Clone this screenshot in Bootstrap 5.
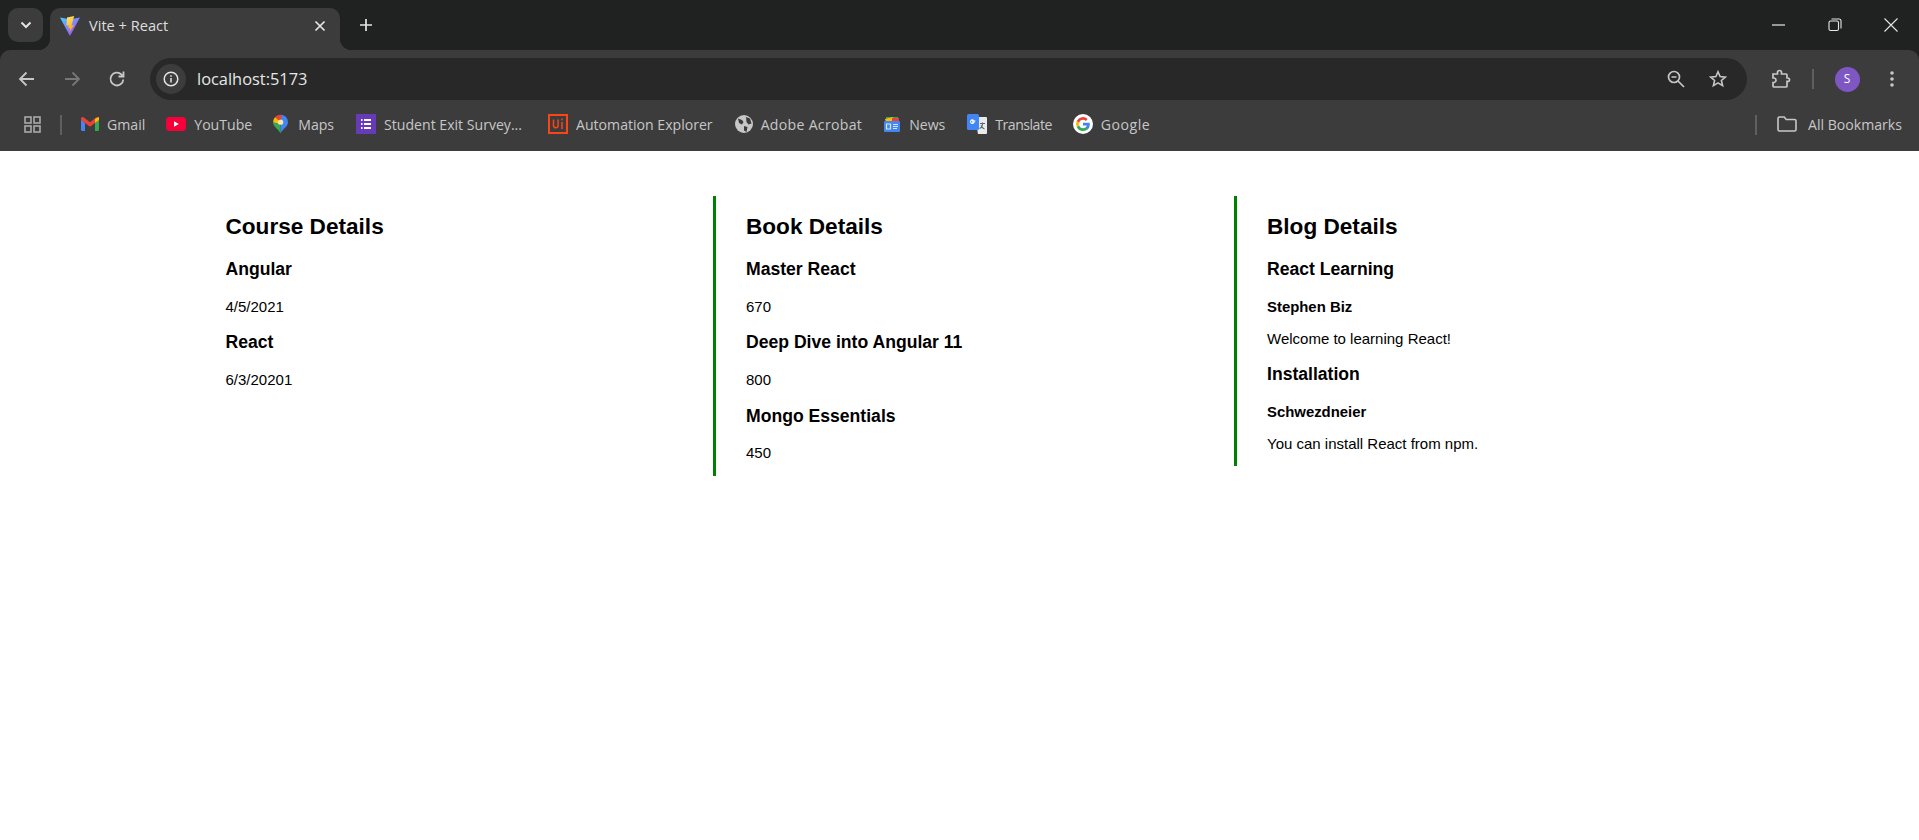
<!DOCTYPE html>
<html lang="en">
<head>
<meta charset="UTF-8" />
<title>Vite + React</title>
<link href="https://cdn.jsdelivr.net/npm/bootstrap@5.3.0/dist/css/bootstrap.min.css" rel="stylesheet" />
<style>
  body { background: #fff; color: #000; font-family: "Liberation Sans", Arial, sans-serif; }
  svg { display: block; flex-shrink: 0; }

  /* browser chrome */
  .chrome-ui { background: #202221; font-family: "Open Sans", "Noto Sans", sans-serif; color: #c7c7c7; }
  .tab-strip { height: 50px; padding: 8px 8px 0; }
  .tab-menu { width: 35px; height: 34px; border-radius: 10px; background: #3c3c3c; }
  .tab-active { position: relative; width: 290px; height: 42px; margin-left: 7px; padding: 0 14px 6px 10px; background: #3c3c3c; border-radius: 10px 10px 0 0; font-size: 14.6px; color: #dedede; }
  .tab-active::before, .tab-active::after { content: ""; position: absolute; bottom: 0; width: 12px; height: 12px; }
  .tab-active::before { left: -12px; background: radial-gradient(circle at 0 0, transparent 12px, #3c3c3c 12.5px); }
  .tab-active::after { right: -12px; background: radial-gradient(circle at 100% 0, transparent 12px, #3c3c3c 12.5px); }
  .tab-title { margin-left: 9px; }
  .tab-plus { margin-left: 19px; margin-top: -8px; }
  .win-controls { gap: 42px; margin-right: 13px; margin-top: -8px; }
  .tool-bar { height: 50px; background: #3c3c3c; border-radius: 10px 10px 0 0; padding: 0 0 0 16px; }
  .nav-icons { height: 58px; gap: 23px; width: 134px; }
  .reload-icon { margin-left: 2px; }
  .url-pill { width: 1597px; height: 42px; margin-top: 8px; background: #282828; border-radius: 21px; padding: 0 20px 0 6px; }
  .info-circle { width: 30px; height: 30px; border-radius: 50%; background: #3c3c3c; }
  .url-text { margin-left: 11px; font-size: 16.4px; color: #e6e6e6; }
  .tool-end { height: 58px; }
  .ext-icon { margin-left: 24px; }
  .tool-sep { margin-left: 21px; }
  .user-avatar { width: 25px; height: 25px; margin-left: 20.5px; border-radius: 50%; background: #7e57c2; color: #fff; font-size: 12px; }
  .more-icon { margin-left: 29.5px; }
  .bar-sep { width: 2px; height: 20px; background: #5f5f5f; }
  .bookmark-bar { height: 51px; background: #3c3c3c; padding: 0 17px 2px 24px; font-size: 14.1px; }
  .bookmark-item { gap: 8px; margin-left: 21px; white-space: nowrap; }
  .apps-sep { margin: 0 0 0 19px; }
  .apps-sep + .bookmark-item { margin-left: 19px; }
  .maps-mark { gap: 10px; }
  .forms-mark { margin-left: 22px; }
  .ui-mark { margin-left: 26px; }
  .acrobat-mark { margin-left: 22px; letter-spacing: .3px; }
  .translate-mark { margin-left: 22px; letter-spacing: -.5px; }
  .google-mark { letter-spacing: .5px; }
  .all-marks { gap: 11px; margin-left: 20px; }

  /* page */
  .detail-row { background: #fff; padding: 45px 0 0 192px; }
  .detail-col { width: 521px; padding: 18px 0 15px 33.5px; }
  .detail-col + .detail-col { border-left: 3px solid green; padding-left: 30px; }
  .detail-col h2 { font-size: 22.6px; font-weight: 700; line-height: 26px; margin: 0 0 19px; }
  .detail-col h3 { font-size: 17.6px; font-weight: 700; line-height: 20px; margin: 0 0 19.7px; }
  .detail-col h4 { font-size: 14.9px; font-weight: 700; line-height: 16px; margin: 0 0 16px; }
  .detail-col p { font-size: 15px; line-height: 16px; margin: 0 0 17.6px; }
  .detail-col p:last-child { margin-bottom: 0; }
  .detail-col.blog-entry { padding-bottom: 14.5px; }
  .blog-entry p { margin-bottom: 17.5px; }
</style>
</head>
<body>
  <div class="chrome-ui">
    <div class="tab-strip d-flex align-items-start">
      <div class="tab-menu d-flex align-items-center justify-content-center">
        <svg width="14" height="14" viewBox="0 0 14 14"><path d="M2.5 4.5 7 9l4.5-4.5" fill="none" stroke="#e3e3e3" stroke-width="2"/></svg>
      </div>
      <div class="tab-active d-flex align-items-center">
        <svg width="20" height="20" viewBox="0 0 20 20">
          <defs>
            <linearGradient id="viteBody" x1="0" y1="0" x2="1" y2="1"><stop offset="0" stop-color="#41d1ff"/><stop offset="1" stop-color="#bd34fe"/></linearGradient>
            <linearGradient id="viteBolt" x1="0" y1="0" x2="0.4" y2="1"><stop offset="0" stop-color="#ffea83"/><stop offset="1" stop-color="#ffa800"/></linearGradient>
          </defs>
          <path d="M0 1.5 10 3.2 20 1.5 10.4 19.3a.5.5 0 0 1-.9 0z" fill="url(#viteBody)"/>
          <path d="M14.2 0 7 1.4l-.5 8.3 2.2-.5-.5 3.2 2-.4-.7 4.2L14 9l-2.4.5.8-3z" fill="url(#viteBolt)"/>
        </svg>
        <span class="flex-grow-1 tab-title">Vite + React</span>
        <svg width="12" height="12" viewBox="0 0 12 12"><path d="M1.5 1.5l9 9m0-9l-9 9" stroke="#e6e6e6" stroke-width="1.7"/></svg>
      </div>
      <svg class="tab-plus align-self-center" width="14" height="14" viewBox="0 0 14 14"><path d="M7 1v12M1 7h12" stroke="#e6e6e6" stroke-width="1.7"/></svg>
      <div class="win-controls d-flex align-items-center align-self-center ms-auto">
        <svg width="14" height="14" viewBox="0 0 14 14"><path d="M0 7h13" stroke="#e6e6e6" stroke-width="1.2"/></svg>
        <svg width="14" height="14" viewBox="0 0 14 14" fill="none" stroke="#e6e6e6" stroke-width="1.1"><rect x="1" y="3" width="9.500" height="9.500" rx="1.500"/><path d="M3.500 1h7.500a2 2 0 0 1 2 2v7.500"/></svg>
        <svg width="14" height="14" viewBox="0 0 14 14"><path d="M.5.5l13 13m0-13l-13 13" stroke="#e6e6e6" stroke-width="1.1"/></svg>
      </div>
    </div>

    <div class="tool-bar d-flex align-items-start">
      <div class="nav-icons d-flex align-items-center">
        <svg width="22" height="18" viewBox="0 0 22 18" fill="none" stroke="#c7c7c7" stroke-width="1.8"><path d="M18 9H4M10.500 2.500 4 9l6.500 6.500"/></svg>
        <svg width="22" height="18" viewBox="0 0 22 18" fill="none" stroke="#777" stroke-width="1.8"><path d="M4 9h14M11.500 2.500 18 9l-6.500 6.500"/></svg>
        <svg class="reload-icon" width="18" height="18" viewBox="0 0 18 18" fill="none" stroke="#c7c7c7" stroke-width="1.8"><path d="M15.300 9.500a6.400 6.400 0 1 1-1.900-5L15.500 6.500"/><path d="M15.500 1.500v5h-5" /></svg>
      </div>
      <div class="url-pill d-flex align-items-center">
        <div class="info-circle d-flex align-items-center justify-content-center">
          <svg width="16" height="16" viewBox="0 0 16 16" fill="none" stroke="#e3e3e3" stroke-width="1.500"><circle cx="8" cy="8" r="6.800"/><path d="M8 7v4.500M8 4.200v1.500"/></svg>
        </div>
        <span class="url-text flex-grow-1">localhost:5173</span>
        <svg class="me-4" width="18" height="18" viewBox="0 0 18 18" fill="none" stroke="#c7c7c7" stroke-width="1.700"><circle cx="7" cy="7" r="5.500"/><path d="M11 11l6 6M4.500 7h5"/></svg>
        <svg width="18" height="18" viewBox="0 0 18 18" fill="none" stroke="#c7c7c7" stroke-width="1.600"><path d="M9 1.800l2.100 4.800 5.200.5-3.900 3.400 1.200 5.100L9 12.900l-4.600 2.700 1.200-5.100L1.700 7.100l5.200-.5z"/></svg>
      </div>
      <div class="tool-end d-flex align-items-center">
        <svg class="ext-icon" width="20" height="20" viewBox="0 0 20 20" fill="none" stroke="#c7c7c7" stroke-width="1.700"><path d="M2 5h4.500V3.500a2 2 0 0 1 4 0V5H15a1 1 0 0 1 1 1v3h.8a1.700 1.700 0 0 1 0 3.400H16V17a1 1 0 0 1-1 1H3a1 1 0 0 1-1-1v-3.500h1.200a2.300 2.300 0 0 0 0-4.500H2z"/></svg>
        <span class="bar-sep tool-sep"></span>
        <span class="user-avatar d-flex align-items-center justify-content-center">S</span>
        <svg class="more-icon" width="6" height="18" viewBox="0 0 6 18" fill="#c7c7c7"><circle cx="3" cy="3" r="1.800"/><circle cx="3" cy="9" r="1.800"/><circle cx="3" cy="15" r="1.800"/></svg>
      </div>
    </div>

    <div class="bookmark-bar d-flex align-items-center">
      <svg width="17" height="17" viewBox="0 0 17 17" fill="none" stroke="#a9a9a9" stroke-width="1.600"><rect x="1" y="1" width="6" height="6"/><rect x="10" y="1" width="6" height="6"/><rect x="1" y="10" width="6" height="6"/><rect x="10" y="10" width="6" height="6"/></svg>
      <span class="bar-sep apps-sep"></span>
      <div class="bookmark-item d-flex align-items-center">
        <svg width="18" height="14" viewBox="0 0 18 14"><path d="M0 2v10.500A1.500 1.500 0 0 0 1.500 14H4V6z" fill="#4285f4"/><path d="M14 6v8h2.500a1.500 1.500 0 0 0 1.500-1.500V2z" fill="#34a853"/><path d="M0 1.500C0 .2 1.500-.5 2.500.3L9 5.200 15.500.3C16.500-.5 18 .2 18 1.500V3l-4 3-5 3.700L4 6 0 3z" fill="#ea4335"/><path d="M14 1.700 18 0v3l-4 3z" fill="#fbbc04"/></svg>
        <span>Gmail</span>
      </div>
      <div class="bookmark-item d-flex align-items-center">
        <svg width="20" height="14" viewBox="0 0 20 14"><rect width="20" height="14" rx="3.500" fill="#f5003b"/><path d="M8 4.200v5.600L12.800 7z" fill="#fff"/></svg>
        <span>YouTube</span>
      </div>
      <div class="bookmark-item maps-mark d-flex align-items-center">
        <svg width="15" height="20" viewBox="0 0 16 20"><path d="M8 0a8 8 0 0 1 8 8c0 4.500-5.500 7-8 12z" fill="#4285f4"/><path d="M8 20C5.500 15 0 12.500 0 8l5 1.500 3 2z" fill="#34a853"/><path d="M0 8a8 8 0 0 1 2.300-5.600L6 6 5 9.500z" fill="#fbbc04"/><path d="M2.300 2.400A8 8 0 0 1 8 0l2 3-4 3z" fill="#ea4335"/><circle cx="8" cy="8" r="2.900" fill="#fbe9a5"/></svg>
        <span>Maps</span>
      </div>
      <div class="bookmark-item forms-mark d-flex align-items-center">
        <svg width="20" height="20" viewBox="0 0 20 20"><rect width="20" height="20" fill="#673ab7"/><path d="M5 6h1.500M8 6h7M5 10h1.500M8 10h7M5 14h1.500M8 14h7" stroke="#fff" stroke-width="1.800"/></svg>
        <span>Student Exit Survey...</span>
      </div>
      <div class="bookmark-item ui-mark d-flex align-items-center">
        <svg width="20" height="20" viewBox="0 0 20 20" fill="none"><rect x="1" y="1" width="18" height="18" stroke="#fa4616" stroke-width="2"/><path d="M5.500 5.500v6a2.300 2.300 0 0 0 4.600 0v-6M14 8v7M14 4.500v1.700" stroke="#fa4616" stroke-width="1.500"/></svg>
        <span>Automation Explorer</span>
      </div>
      <div class="bookmark-item acrobat-mark d-flex align-items-center">
        <svg width="18" height="18" viewBox="0 0 18 18"><circle cx="9" cy="9" r="9" fill="#c7c7c7"/><path d="M3 3.500 7 5l1.500 2L7 9.500 4 8zM11 2l4 1.500 1.500 5-3 1-2-2.500zM9 11l3.500 1-1 5-2.500-1.500z" fill="#3c3c3c"/></svg>
        <span>Adobe Acrobat</span>
      </div>
      <div class="bookmark-item d-flex align-items-center">
        <svg width="18" height="18" viewBox="0 0 18 18"><path d="M3 2h12v5H3z" fill="#34a853"/><path d="M2 4l8-2 1 5H3z" fill="#fbbc04"/><path d="M9 3h7v5H9z" fill="#ea4335"/><rect x="1" y="6" width="16" height="11" rx="1" fill="#4285f4"/><path d="M3.500 9h4v5h-4zM10 9.500h5M10 11.500h5M10 13.500h4" fill="none" stroke="#d8e6fd" stroke-width="1.200"/></svg>
        <span>News</span>
      </div>
      <div class="bookmark-item translate-mark d-flex align-items-center">
        <svg width="20" height="20" viewBox="0 0 20 20"><path d="M8 3h11a1 1 0 0 1 1 1v15a1 1 0 0 1-1 1h-8z" fill="#e8eaed"/><rect width="12" height="16" rx="1.500" fill="#4285f4"/><path d="M8.500 7H5.800v1.300h1.300a1.800 1.800 0 1 1-.5-2" fill="none" stroke="#fff" stroke-width="1.100"/><path d="M13 9.500h5M15.500 8.500v1c0 2.500-1.500 4.500-3 5M14 11.500c.8 2 2 3 3.500 3.500" fill="none" stroke="#5f6368" stroke-width="1.100"/></svg>
        <span>Translate</span>
      </div>
      <div class="bookmark-item google-mark d-flex align-items-center">
        <svg width="20" height="20" viewBox="0 0 20 20"><circle cx="10" cy="10" r="10" fill="#fff"/><path d="M16.800 10.200c0-.6 0-1-.1-1.500H10v2.800h3.800a3.300 3.300 0 0 1-1.400 2.100l2.300 1.800c1.300-1.300 2.100-3 2.100-5.200z" fill="#4285f4"/><path d="M10 17c1.900 0 3.500-.6 4.700-1.700l-2.300-1.800c-.6.400-1.400.7-2.400.7a4.100 4.100 0 0 1-3.900-2.900L3.700 13.100A7 7 0 0 0 10 17z" fill="#34a853"/><path d="M6.100 11.300a4.200 4.200 0 0 1 0-2.600L3.700 6.900a7 7 0 0 0 0 6.200z" fill="#fbbc04"/><path d="M10 5.800c1 0 2 .4 2.700 1.100l2-2A7 7 0 0 0 3.700 6.900l2.400 1.800A4.100 4.100 0 0 1 10 5.800z" fill="#ea4335"/></svg>
        <span>Google</span>
      </div>
      <span class="bar-sep ms-auto"></span>
      <div class="all-marks d-flex align-items-center">
        <svg width="20" height="16" viewBox="0 0 20 16" fill="none" stroke="#c7c7c7" stroke-width="1.600"><path d="M1 2.500A1.500 1.500 0 0 1 2.500 1h4.700l2 2.500h8.300A1.500 1.500 0 0 1 19 5v8.500a1.500 1.500 0 0 1-1.500 1.500h-15A1.500 1.500 0 0 1 1 13.500z"/></svg>
        <span>All Bookmarks</span>
      </div>
    </div>
  </div>

  <div class="detail-row d-flex align-items-start">
    <section class="detail-col">
      <h2>Course Details</h2>
      <h3>Angular</h3>
      <p>4/5/2021</p>
      <h3>React</h3>
      <p>6/3/20201</p>
    </section>
    <section class="detail-col">
      <h2>Book Details</h2>
      <h3>Master React</h3>
      <p>670</p>
      <h3>Deep Dive into Angular 11</h3>
      <p>800</p>
      <h3>Mongo Essentials</h3>
      <p>450</p>
    </section>
    <section class="detail-col blog-entry">
      <h2>Blog Details</h2>
      <h3>React Learning</h3>
      <h4>Stephen Biz</h4>
      <p>Welcome to learning React!</p>
      <h3>Installation</h3>
      <h4>Schwezdneier</h4>
      <p>You can install React from npm.</p>
    </section>
  </div>

  <script src="https://cdn.jsdelivr.net/npm/bootstrap@5.3.0/dist/js/bootstrap.bundle.min.js"></script>
</body>
</html>
